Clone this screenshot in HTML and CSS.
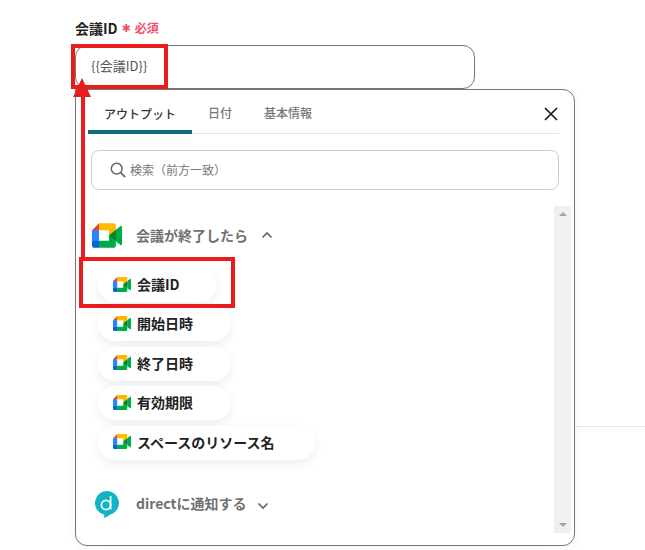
FILE: index.html
```html
<!DOCTYPE html>
<html lang="ja">
<head>
<meta charset="utf-8">
<title>会議ID</title>
<link rel="stylesheet" href="styles.css">
</head>
<body>
<svg class="defs" width="0" height="0" aria-hidden="true">
  <symbol id="meet" viewBox="0 0 87.5 72">
    <path fill="#00832d" d="M49.5 36l8.53 9.75 11.47 7.33 2-17.02-2-16.64-11.69 6.44z"/>
    <path fill="#0066da" d="M0 51.5V66c0 3.315 2.685 6 6 6h14.5l3-10.96-3-9.54-9.95-3z"/>
    <path fill="#e94235" d="M20.5 0L0 20.5l10.55 3 9.95-3 2.95-9.41z"/>
    <path fill="#2684fc" d="M20.5 20.5H0v31h20.5z"/>
    <path fill="#00ac47" d="M82.6 8.68L69.5 19.42v33.66l13.16 10.79c1.97 1.54 4.85.135 4.85-2.37V11c0-2.535-2.945-3.925-4.91-2.32zM49.5 36v15.5h-29V72h43c3.315 0 6-2.685 6-6V53.08z"/>
    <path fill="#ffba00" d="M63.5 0h-43v20.5h29V36l20-16.57V6c0-3.315-2.685-6-6-6z"/>
  </symbol>
</svg>

<main class="page">
  <div class="back-line"></div>
  <div class="label-row">
    <span class="label">会議ID</span>
    <span class="req-star">✱</span>
    <span class="req">必須</span>
  </div>
  <div class="field">{{会議ID}}</div>

  <section class="panel">
    <header class="tabs">
      <span class="tab tab-active">アウトプット</span>
      <span class="tab">日付</span>
      <span class="tab">基本情報</span>
      <svg class="close" viewBox="0 0 14 14" width="14" height="14"><path d="M1 1l12 12M13 1L1 13" stroke="#1a1a1a" stroke-width="1.7" fill="none"/></svg>
    </header>

    <div class="search">
      <svg class="search-icon" viewBox="0 0 16 16" width="16" height="16"><circle cx="6.7" cy="6.7" r="5.4" fill="none" stroke="#666" stroke-width="1.5"/><path d="M10.7 10.7l4.4 4.4" stroke="#666" stroke-width="1.8" fill="none"/></svg>
      <span class="search-text">検索（前方一致）</span>
    </div>

    <div class="list-wrap">
      <div class="list">
        <div class="section-head head-meet">
          <svg class="icon-lg" width="30" height="25"><use href="#meet"/></svg>
          <span class="section-title">会議が終了したら</span>
          <svg class="chev" viewBox="0 0 12 8" width="12" height="8"><path d="M1.5 6.5L6 2l4.5 4.5" fill="none" stroke="#666" stroke-width="1.7"/></svg>
        </div>
        <div class="pills">
          <div class="pill pill-id"><svg class="icon-sm" width="18" height="15"><use href="#meet"/></svg>会議ID</div>
          <div class="pill"><svg class="icon-sm" width="18" height="15"><use href="#meet"/></svg>開始日時</div>
          <div class="pill"><svg class="icon-sm" width="18" height="15"><use href="#meet"/></svg>終了日時</div>
          <div class="pill"><svg class="icon-sm" width="18" height="15"><use href="#meet"/></svg>有効期限</div>
          <div class="pill pill-wide"><svg class="icon-sm" width="18" height="15"><use href="#meet"/></svg>スペースのリソース名</div>
        </div>
        <div class="section-head head-direct">
          <svg class="icon-d" viewBox="0 0 24 27" width="24" height="27">
            <path fill="#12b3c4" d="M12 0a12 12 0 0 1 3.4 23.5Q12 26 8.5 27q1-1.600.8-3.300A12 12 0 0 1 12 0z"/>
            <circle cx="11" cy="14" r="4.600" fill="none" stroke="#fff" stroke-width="1.700"/>
            <path d="M15.600 5v13.500" fill="none" stroke="#fff" stroke-width="1.700"/>
          </svg>
          <span class="section-title">directに通知する</span>
          <svg class="chev" viewBox="0 0 12 8" width="12" height="8"><path d="M1.500 1.500L6 6l4.500-4.500" fill="none" stroke="#666" stroke-width="1.700"/></svg>
        </div>
      </div>
      <div class="scrollbar">
        <span class="arrow-up"></span>
        <span class="arrow-down"></span>
      </div>
    </div>
  </section>

  <div class="mark mark-field"></div>
  <div class="mark mark-pill"></div>
  <div class="arrow-shaft"></div>
  <div class="arrow-head"></div>
</main>
</body>
</html>
```

FILE: styles.css
```css
* { box-sizing: border-box; }
html, body { margin: 0; height: 100%; overflow: hidden; background: #fff; }
body { font-family: "Noto Sans CJK JP", "Liberation Sans", sans-serif; color: #333; }
.defs { position: absolute; }

.page { position: relative; width: 645px; height: 550px; padding: 18px 0 0 75px; overflow: hidden; }

.back-line { position: absolute; left: 575px; right: 0; top: 426px; height: 1px; background: #e6e6e6; }

.label-row { display: flex; align-items: center; height: 20px; margin-bottom: 7px; }
.label { font-size: 14px; font-weight: 700; color: #222; line-height: 18px; }
.req-star { margin-left: 3px; width: 11px; font-size: 11px; line-height: 20px; color: #f0506e; text-align: center; font-family: "DejaVu Sans", sans-serif; padding-top: 2px; }
.req { margin-left: 3px; font-size: 12px; font-weight: 700; color: #f0506e; line-height: 20px; }

.field { width: 400px; height: 44px; border: 1px solid #777; border-radius: 12px; padding-left: 15px; font-size: 13px; line-height: 40px; color: #555; }

.panel { position: relative; width: 500px; height: 457px; border: 1px solid #777; border-radius: 0 12px 12px 12px; background: #fff; padding: 0 3px 0 12px; box-shadow: 0 2px 12px rgba(0,0,0,.04); }

.tabs { display: flex; align-items: stretch; height: 44px; border-bottom: 1px solid #e4e4e4; width: 471px; }
.tab { display: flex; align-items: center; padding: 3px 16px 0; font-size: 12px; font-weight: 500; color: #777; line-height: 1; }
.tab-active { color: #333; border-bottom: 4px solid #0d6a80; padding-top: 7px; border-radius: 2px 2px 0 0; margin-bottom: -1px; width: 104px; white-space: nowrap; }
.close { margin: 17px 1px 0 auto; }

.search { display: flex; align-items: center; gap: 4px; width: 468px; height: 40px; margin: 16px 0 0 3px; padding-left: 18px; border: 1px solid #ccc; border-radius: 8px; font-size: 12px; color: #777; }
.search-icon { flex: none; }
.search-text { margin-bottom: 1px; }

.list-wrap { display: flex; height: 327px; margin-top: 16px; }
.list { width: 466px; flex: none; }
.section-head { display: flex; align-items: center; }
.section-title { font-size: 14px; font-weight: 700; color: #707070; white-space: nowrap; margin-bottom: 1px; }
.head-meet { height: 26px; margin-top: 16px; padding-left: 4px; }
.head-meet .section-title { margin-left: 14px; }
.head-meet .chev { margin-left: 13px; }
.head-direct { margin-top: 31px; padding-left: 7px; height: 27px; }
.head-direct .section-title { margin-left: 17px; margin-bottom: 3px; }
.head-direct .chev { margin-left: 11px; margin-top: 3px; }

.pills { display: flex; flex-direction: column; align-items: flex-start; gap: 5.4px; margin-top: 20px; padding-left: 10px; }
.pill { display: flex; align-items: center; width: 133px; height: 34px; padding: 0 0 2px 15px; gap: 6px; border-radius: 17px; background: #fff; font-size: 14px; font-weight: 700; color: #222; white-space: nowrap; box-shadow: 0 4px 12px rgba(0,0,0,.07); }
.pill-id { width: 119px; }
.pill-wide { width: 217px; }

.scrollbar { position: relative; flex: none; width: 17px; background: #f0f0f0; }
.arrow-up, .arrow-down { position: absolute; left: 5px; width: 0; height: 0; border-left: 4px solid transparent; border-right: 4px solid transparent; }
.arrow-up { top: 6px; border-bottom: 4px solid #a3a3a3; }
.arrow-down { bottom: 6px; border-top: 4px solid #a3a3a3; }

.mark { position: absolute; border: 4px solid #e81c1c; pointer-events: none; }
.mark-field { left: 71px; top: 44px; width: 97px; height: 45px; }
.mark-pill { left: 79px; top: 257px; width: 156px; height: 51px; }
.arrow-shaft { position: absolute; left: 81px; top: 96px; width: 4px; height: 162px; background: #e81c1c; }
.arrow-head { position: absolute; left: 73px; top: 78px; width: 0; height: 0; border-left: 9.5px solid transparent; border-right: 9.5px solid transparent; border-bottom: 19px solid #e81c1c; }
```
